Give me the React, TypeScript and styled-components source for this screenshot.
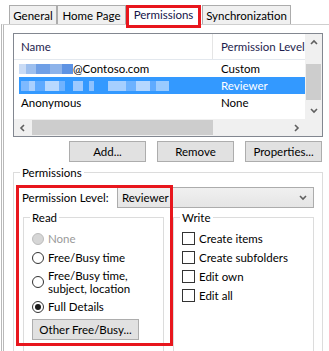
import React from 'react';
import styled, { createGlobalStyle } from 'styled-components';

const FONT = `Lato, "Open Sans", "Liberation Sans", sans-serif`;

const GlobalStyle = createGlobalStyle`
  html, body {
    margin: 0;
    padding: 0;
    background: #fff;
  }
  body {
    font-family: ${FONT};
  }
`;

const Dialog = styled.div`
  width: 329px;
  height: 351px;
  overflow: hidden;
  background: #fff;
  font-family: ${FONT};
  font-size: 11.5px;
  color: #000;
  display: flex;
  flex-direction: column;
`;

const TabStrip = styled.div`
  display: flex;
  align-items: flex-start;
  height: 24px;
  padding-left: 9px;
  position: relative;
  z-index: 1;
`;

const Tab = styled.div<{ $w: number; $gap?: number; $active?: boolean }>`
  box-sizing: border-box;
  width: ${(p) => p.$w}px;
  margin-left: ${(p) => p.$gap ?? 0}px;
  margin-top: 5px;
  height: ${(p) => (p.$active ? 23 : 19)}px;
  border: ${(p) => (p.$active ? '3px solid #e8161d' : '1px solid #acacac')};
  border-bottom: ${(p) => (p.$active ? '3px solid #e8161d' : 'none')};
  background: ${(p) => (p.$active ? '#fff' : '#f0f0f0')};
  display: flex;
  justify-content: center;
  padding-top: ${(p) => (p.$active ? 0 : 3)}px;
  line-height: 14px;
  white-space: nowrap;
  color: ${(p) => (p.$active ? '#14144a' : '#000')};
`;

const TabPage = styled.div`
  flex: 1;
  margin-left: 1px;
  border-left: 3px double #b9b9b9;
  border-top: 1px solid #cfcfcf;
  padding: 8px 6px 0 9px;
`;

const ListBox = styled.div`
  box-sizing: border-box;
  height: 104px;
  border: 1px solid #828790;
  display: grid;
  grid-template-columns: 1fr 17px;
  grid-template-rows: 1fr 17px;
  overflow: hidden;
`;

const ListContent = styled.div`
  overflow: hidden;
  background: #fff;
`;

const HeaderRow = styled.div`
  box-sizing: border-box;
  display: grid;
  grid-template-columns: 199px 1fr;
  height: 26px;
  border-bottom: 1px solid #e3e8ee;
  color: #1e1e4e;
`;

const HeaderCell = styled.div<{ $first?: boolean }>`
  display: flex;
  align-items: center;
  padding-left: ${(p) => (p.$first ? 7 : 8)}px;
  border-right: ${(p) => (p.$first ? '1px solid #e5e5e5' : 'none')};
  white-space: nowrap;
  overflow: hidden;
`;

const Row = styled.div<{ $selected?: boolean }>`
  display: grid;
  grid-template-columns: 202px 1fr;
  height: 17px;
  margin-left: 5px;
  align-items: center;
  background: ${(p) => (p.$selected ? '#3399ff' : 'transparent')};
  color: ${(p) => (p.$selected ? '#fff' : '#000')};
  white-space: nowrap;
`;

const Cell = styled.div<{ $first?: boolean }>`
  display: flex;
  align-items: center;
  padding-left: ${(p) => (p.$first ? 2 : 0)}px;
  overflow: hidden;
`;

const Mosaic = styled.span<{ $shift?: number }>`
  display: inline-flex;
  height: 10px;
  margin-left: ${(p) => p.$shift ?? 0}px;
  filter: blur(0.4px);
`;

const Seg = styled.span<{ $w: number; $c: string }>`
  width: ${(p) => p.$w}px;
  height: 100%;
  background: ${(p) => p.$c};
`;

const VScroll = styled.div`
  display: flex;
  flex-direction: column;
  background: #f0f0f0;
`;

const HScroll = styled.div`
  display: flex;
  background: #f0f0f0;
`;

const ArrowBox = styled.div`
  width: 17px;
  height: 17px;
  flex: none;
  display: flex;
  align-items: center;
  justify-content: center;
`;

const VTrack = styled.div`
  flex: 1;
  padding: 13px 1px 0;
`;

const VThumb = styled.div`
  height: 36px;
  background: #cdcdcd;
`;

const HTrack = styled.div`
  flex: 1;
  padding: 1px 0 1px 1px;
`;

const HThumb = styled.div`
  width: 181px;
  height: 100%;
  background: #cdcdcd;
`;

const Corner = styled.div`
  background: #f0f0f0;
`;

const ButtonRow = styled.div`
  display: flex;
  justify-content: flex-end;
  gap: 11px;
  margin-top: 4px;
  padding-right: 1px;
`;

const Button = styled.button<{ $w?: number }>`
  box-sizing: border-box;
  width: ${(p) => p.$w ?? 77}px;
  height: 21px;
  border: 1px solid #adadad;
  background: #e1e1e1;
  font-family: ${FONT};
  font-size: 11.5px;
  color: #000;
  padding: 0;
  border-radius: 0;
  white-space: nowrap;
`;

const Group = styled.fieldset<{ $pad?: string }>`
  margin: 0;
  min-width: 0;
  border: 1px solid #dcdcdc;
  padding: ${(p) => p.$pad ?? '0 8px 20px'};
`;

const OuterGroup = styled(Group)`
  margin-top: 3px;
`;

const Legend = styled.legend`
  padding: 0 2px;
  margin-left: -2px;
  line-height: 15px;
`;

const PermBody = styled.div`
  position: relative;
  padding-top: 7px;
`;

const Highlight = styled.div`
  position: absolute;
  left: -6px;
  top: 5px;
  width: 157px;
  height: 161px;
  box-sizing: border-box;
  border: 3px solid #e8161d;
  pointer-events: none;
  z-index: 2;
`;

const LevelRow = styled.div`
  display: flex;
  align-items: center;
  height: 21px;
`;

const LevelLabel = styled.div`
  width: 95px;
  flex: none;
  white-space: nowrap;
`;

const Combo = styled.div`
  box-sizing: border-box;
  flex: 1;
  height: 21px;
  border: 1px solid #acacac;
  background: linear-gradient(#f0f0f0, #e5e5e5);
  display: flex;
  align-items: center;
  justify-content: space-between;
  padding: 0 6px 0 4px;
`;

const GroupsGrid = styled.div`
  display: grid;
  grid-template-columns: 1fr 1fr;
  gap: 9px;
  margin: 2px 0 0 1px;
`;

const Item = styled.div<{ $h?: number; $disabled?: boolean }>`
  display: flex;
  align-items: center;
  gap: 4px;
  height: ${(p) => p.$h ?? 19}px;
  line-height: 13px;
  white-space: nowrap;
  color: ${(p) => (p.$disabled ? '#9a9a9a' : '#000')};
`;

const Radio = styled.span<{ $checked?: boolean; $disabled?: boolean }>`
  box-sizing: border-box;
  width: 12px;
  height: 12px;
  flex: none;
  border-radius: 50%;
  border: 1px solid ${(p) => (p.$disabled ? '#bcbcbc' : '#333')};
  background: ${(p) => (p.$disabled ? '#d6d6d6' : '#fff')};
  display: flex;
  align-items: center;
  justify-content: center;

  &::after {
    content: '';
    display: ${(p) => (p.$checked ? 'block' : 'none')};
    width: 6px;
    height: 6px;
    border-radius: 50%;
    background: #1a1a1a;
  }
`;

const Check = styled.span`
  box-sizing: border-box;
  width: 13px;
  height: 13px;
  flex: none;
  border: 1px solid #333;
  background: #fff;
`;

const ReadButton = styled(Button)`
  margin-top: 3px;
`;

const Chevron = ({ dir }: { dir: 'up' | 'down' | 'left' | 'right' }) => {
  const pts = {
    up: '1,5 4,2 7,5',
    down: '1,2 4,5 7,2',
    left: '5,1 2,4 5,7',
    right: '2,1 5,4 2,7',
  }[dir];
  const vertical = dir === 'up' || dir === 'down';
  return (
    <svg width={vertical ? 8 : 7} height={vertical ? 7 : 8} viewBox={vertical ? '0 0 8 7' : '0 0 7 8'}>
      <polyline points={pts} fill="none" stroke="#606060" strokeWidth="1.6" />
    </svg>
  );
};

const emailBlur1 = [
  { w: 8, c: '#c9dbf5' },
  { w: 10, c: '#9dbfee' },
  { w: 14, c: '#6f9fe6' },
  { w: 12, c: '#8db3ea' },
  { w: 11, c: '#5e93e3' },
];

const emailBlur2 = [
  { w: 8, c: '#7db9ff' },
  { w: 6, c: '#a9d0ff' },
  { w: 10, c: '#5eaaff' },
  { w: 14, c: '#b8d9ff' },
  { w: 6, c: '#6fb3ff' },
  { w: 8, c: '#3399ff' },
  { w: 10, c: '#9cc9ff' },
  { w: 6, c: '#3399ff' },
  { w: 5, c: '#8ec2ff' },
  { w: 14, c: '#3399ff' },
  { w: 18, c: '#a6cfff' },
  { w: 10, c: '#6db2ff' },
  { w: 14, c: '#b5d7ff' },
  { w: 6, c: '#5fabff' },
  { w: 13, c: '#9acbff' },
];

export default function App() {
  return (
    <>
      <GlobalStyle />
      <Dialog>
        <TabStrip>
          <Tab $w={48}>General</Tab>
          <Tab $w={69}>Home Page</Tab>
          <Tab $w={75} $active>Permissions</Tab>
          <Tab $w={89} $gap={1}>Synchronization</Tab>
        </TabStrip>
        <TabPage>
          <ListBox>
            <ListContent>
              <HeaderRow>
                <HeaderCell $first>Name</HeaderCell>
                <HeaderCell>Permission Level</HeaderCell>
              </HeaderRow>
              <Row>
                <Cell $first>
                  <Mosaic $shift={-3}>
                    {emailBlur1.map((s, i) => (
                      <Seg key={i} $w={s.w} $c={s.c} />
                    ))}
                  </Mosaic>
                  @Contoso.com
                </Cell>
                <Cell>Custom</Cell>
              </Row>
              <Row $selected>
                <Cell $first>
                  <Mosaic>
                    {emailBlur2.map((s, i) => (
                      <Seg key={i} $w={s.w} $c={s.c} />
                    ))}
                  </Mosaic>
                </Cell>
                <Cell>Reviewer</Cell>
              </Row>
              <Row>
                <Cell $first>Anonymous</Cell>
                <Cell>None</Cell>
              </Row>
            </ListContent>
            <VScroll>
              <ArrowBox>
                <Chevron dir="up" />
              </ArrowBox>
              <VTrack>
                <VThumb />
              </VTrack>
              <ArrowBox>
                <Chevron dir="down" />
              </ArrowBox>
            </VScroll>
            <HScroll>
              <ArrowBox>
                <Chevron dir="left" />
              </ArrowBox>
              <HTrack>
                <HThumb />
              </HTrack>
              <ArrowBox>
                <Chevron dir="right" />
              </ArrowBox>
            </HScroll>
            <Corner />
          </ListBox>

          <ButtonRow>
            <Button>Add...</Button>
            <Button>Remove</Button>
            <Button>Properties...</Button>
          </ButtonRow>

          <OuterGroup>
            <Legend>Permissions</Legend>
            <PermBody>
              <Highlight />
              <LevelRow>
                <LevelLabel>Permission Level:</LevelLabel>
                <Combo>
                  <span>Reviewer</span>
                  <Chevron dir="down" />
                </Combo>
              </LevelRow>
              <GroupsGrid>
                <Group $pad="4px 8px 14px">
                  <Legend>Read</Legend>
                  <Item $disabled>
                    <Radio $disabled />
                    None
                  </Item>
                  <Item>
                    <Radio />
                    Free/Busy time
                  </Item>
                  <Item $h={30}>
                    <Radio />
                    <span>
                      Free/Busy time,
                      <br />
                      subject, location
                    </span>
                  </Item>
                  <Item>
                    <Radio $checked />
                    Full Details
                  </Item>
                  <ReadButton $w={107}>Other Free/Busy...</ReadButton>
                </Group>
                <Group $pad="4px 8px 14px">
                  <Legend>Write</Legend>
                  <Item>
                    <Check />
                    Create items
                  </Item>
                  <Item>
                    <Check />
                    Create subfolders
                  </Item>
                  <Item>
                    <Check />
                    Edit own
                  </Item>
                  <Item>
                    <Check />
                    Edit all
                  </Item>
                </Group>
              </GroupsGrid>
            </PermBody>
          </OuterGroup>
        </TabPage>
      </Dialog>
    </>
  );
}
